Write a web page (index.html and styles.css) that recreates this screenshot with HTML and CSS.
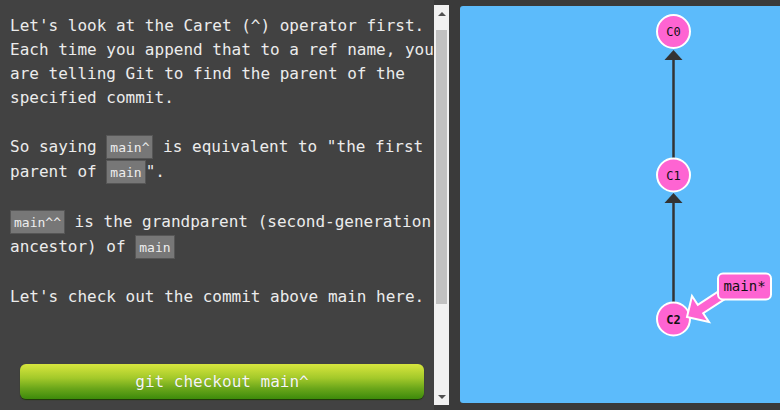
FILE: index.html
```html
<!DOCTYPE html>
<html>
<head>
<meta charset="utf-8">
<link rel="stylesheet" href="styles.css">
</head>
<body>
<div class="app">
  <div class="left">
    <div class="text">
      <p>Let's look at the Caret (^) operator first.<br>Each time you append that to a ref name, you<br>are telling Git to find the parent of the<br>specified commit.</p>
      <p>So saying <code>main^</code> is equivalent to "the first<br>parent of <code>main</code>".</p>
      <p><code>main^^</code> is the grandparent (second-generation<br>ancestor) of <code>main</code></p>
      <p>Let's check out the commit above main here.</p>
    </div>
    <div class="actions">
      <button class="cmd">git checkout main^</button>
    </div>
  </div>
  <div class="scrollbar">
    <div class="arrow up"></div>
    <div class="track"><div class="thumb"></div></div>
    <div class="arrow down"></div>
  </div>
  <div class="viz">
    <svg class="graph" width="320" height="397" viewBox="0 0 320 397">
      <line x1="213.5" y1="296" x2="213.5" y2="196" stroke="#333" stroke-width="2.5"/>
      <polygon points="213.5,187 204.5,197 222.5,197" fill="#333"/>
      <line x1="213.5" y1="152" x2="213.5" y2="53" stroke="#333" stroke-width="2.5"/>
      <polygon points="213.5,44 204.5,54 222.5,54" fill="#333"/>
      <circle cx="213.5" cy="25.5" r="16.5" fill="#fe64d2" stroke="#fff" stroke-width="2"/>
      <text x="213.5" y="30" class="ctext">C0</text>
      <circle cx="213.5" cy="169" r="16.5" fill="#fe64d2" stroke="#fff" stroke-width="2"/>
      <text x="213.5" y="173.5" class="ctext">C1</text>
      <circle cx="213.5" cy="313" r="16.5" fill="#fe64d2" stroke="#fff" stroke-width="2"/>
      <text x="213.5" y="317.5" class="ctext bold">C2</text>
      <polygon points="227,311 232,290 237.8,298.8 267.1,279.7 272.5,288.1 243.2,307.2 249,316" fill="#fe64d2" stroke="#fff" stroke-width="2"/>
      <rect x="258" y="267.5" width="53" height="26" rx="5" fill="#fe64d2" stroke="#fff" stroke-width="2"/>
      <text x="284.5" y="285" class="ltext">main*</text>
    </svg>
  </div>
</div>
</body>
</html>
```
FILE: styles.css
```css
html, body {
  margin: 0;
  padding: 0;
}
body {
  background: #3a3a3a;
  width: 780px;
  height: 410px;
  overflow: hidden;
}
.app {
  display: flex;
  height: 410px;
}
.left {
  width: 434px;
  flex: none;
  background: #424242;
  display: flex;
  flex-direction: column;
  justify-content: space-between;
}
.text {
  padding: 14px 0 0 10px;
  font-family: "DejaVu Sans Mono", monospace;
  font-size: 16px;
  line-height: 24px;
  color: #ececec;
}
.text p {
  margin: 0 0 25px 0;
  white-space: nowrap;
}
.text code {
  font-family: "DejaVu Sans Mono", monospace;
  font-size: 13px;
  background: #777777;
  border: 1px solid #565656;
  padding: 4px 3px 3px 3px;
  color: #eeeeee;
}
.actions {
  padding: 0 10px 11px 20px;
}
.cmd {
  display: block;
  width: 404px;
  height: 35px;
  border: none;
  border-radius: 6px;
  background: linear-gradient(to bottom, #d8e63e 0%, #a3c92a 40%, #6aa61a 70%, #3d8a0b 100%);
  box-shadow: 0 1px 1px #1e3a05;
  color: #f6f6f6;
  font-family: "DejaVu Sans Mono", monospace;
  font-size: 16px;
  padding: 0;
  text-shadow: 0 0 1px rgba(0,0,0,0.2);
}
.scrollbar {
  width: 15px;
  flex: none;
  margin-top: 5px;
  height: 400px;
  background: #f1f1f1;
  display: flex;
  flex-direction: column;
}
.arrow {
  height: 17px;
  flex: none;
  display: flex;
  justify-content: center;
  align-items: center;
}
.arrow.up::before {
  content: "";
  border-left: 4px solid transparent;
  border-right: 4px solid transparent;
  border-bottom: 4px solid #505050;
}
.arrow.down::before {
  content: "";
  border-left: 4px solid transparent;
  border-right: 4px solid transparent;
  border-top: 4px solid #505050;
}
.track {
  flex: 1;
  padding: 8px 2px 0 2px;
}
.thumb {
  height: 274px;
  background: #c1c1c1;
}
.viz {
  margin: 6px 0 0 11px;
  width: 330px;
  height: 397px;
  flex: none;
  background: #5cbbfb;
  border-radius: 3px 0 0 3px;
}
.graph {
  display: block;
}
.ctext {
  font-family: "DejaVu Sans Mono", monospace;
  font-size: 12px;
  text-anchor: middle;
  fill: #111;
}
.ctext.bold {
  font-weight: bold;
}
.ltext {
  font-family: "DejaVu Sans Mono", monospace;
  font-size: 14px;
  text-anchor: middle;
  fill: #111;
}
```
